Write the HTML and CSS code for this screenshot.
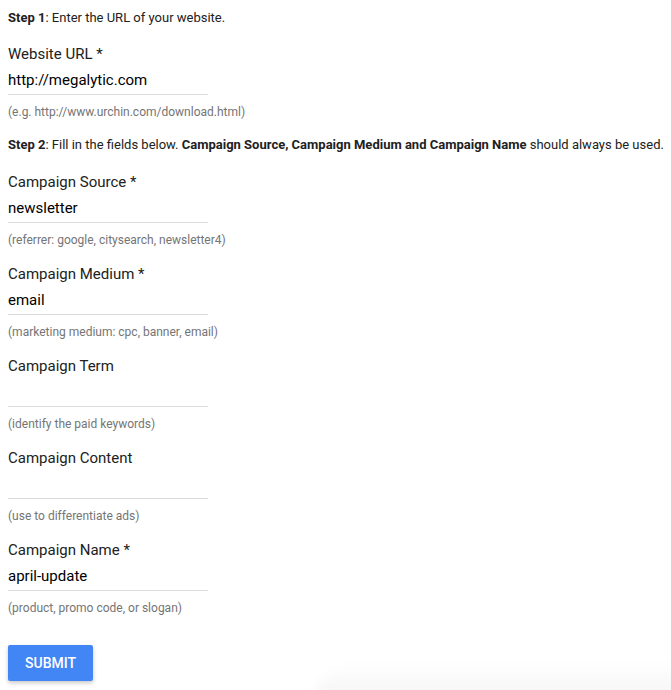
FILE: index.html
```html
<!DOCTYPE html>
<html>
<head>
<meta charset="utf-8">
<link rel="stylesheet" href="styles.css">
</head>
<body>
<form class="builder">
  <p class="step step-first"><b>Step 1</b>: Enter the URL of your website.</p>
  <div class="field">
    <label class="label">Website URL *</label>
    <input class="input" type="text" value="http://megalytic.com">
    <div class="hint">(e.g. http://www.urchin.com/download.html)</div>
  </div>
  <p class="step"><b>Step 2</b>: Fill in the fields below. <b>Campaign Source, Campaign Medium and Campaign Name</b> should always be used.</p>
  <div class="field">
    <label class="label">Campaign Source *</label>
    <input class="input" type="text" value="newsletter">
    <div class="hint">(referrer: google, citysearch, newsletter4)</div>
  </div>
  <div class="field">
    <label class="label">Campaign Medium *</label>
    <input class="input" type="text" value="email">
    <div class="hint">(marketing medium: cpc, banner, email)</div>
  </div>
  <div class="field">
    <label class="label">Campaign Term</label>
    <input class="input" type="text" value="">
    <div class="hint">(identify the paid keywords)</div>
  </div>
  <div class="field">
    <label class="label">Campaign Content</label>
    <input class="input" type="text" value="">
    <div class="hint">(use to differentiate ads)</div>
  </div>
  <div class="field">
    <label class="label">Campaign Name *</label>
    <input class="input" type="text" value="april-update">
    <div class="hint">(product, promo code, or slogan)</div>
  </div>
  <button class="submit" type="button">SUBMIT</button>
</form>
<div class="page-fade"></div>
</body>
</html>
```

FILE: styles.css
```css
html, body {
  margin: 0;
  padding: 0;
  background: #ffffff;
}
body {
  padding: 8px;
  font-family: Roboto, "Noto Sans", "Liberation Sans", sans-serif;
  color: #212121;
  overflow: hidden;
  height: 674px;
  position: relative;
}
.builder {
  display: flex;
  flex-direction: column;
  align-items: flex-start;
}
.step {
  margin: 1px 0 15px 0;
  font-size: 13px;
  line-height: 20px;
  color: #212121;
  white-space: nowrap;
}
.step-first {
  margin: 0 0 14px 0;
}
.step b {
  font-weight: 700;
}
.field {
  display: flex;
  flex-direction: column;
  align-items: flex-start;
  margin-bottom: 14px;
}
.label {
  font-size: 15px;
  line-height: 24px;
  color: #212121;
}
.input {
  margin: 2px 0 0 0;
  width: 200px;
  height: 24px;
  padding: 0 0 2px 0;
  border: none;
  border-bottom: 1px solid #dcdcdc;
  font-family: Roboto, "Noto Sans", "Liberation Sans", sans-serif;
  font-size: 15px;
  line-height: 24px;
  color: #000000;
  background: transparent;
  outline: none;
  box-sizing: content-box;
}
.hint {
  margin-top: 9px;
  font-size: 12px;
  line-height: 16px;
  color: #757575;
}
.field:last-of-type {
  margin-bottom: 0;
}
.submit {
  margin-top: 29px;
  height: 36px;
  padding: 0 17px;
  border: none;
  border-radius: 2px;
  background: #4285f4;
  color: #ffffff;
  font-family: Roboto, "Noto Sans", "Liberation Sans", sans-serif;
  font-size: 14px;
  font-weight: 500;
  box-shadow: 0 2px 4px rgba(0, 0, 0, 0.22);
  cursor: pointer;
}
.page-fade {
  position: absolute;
  left: 316px;
  right: -20px;
  top: 660px;
  bottom: -20px;
  border-top-left-radius: 80px 34px;
  background: linear-gradient(to bottom, rgba(0, 0, 0, 0) 0%, rgba(0, 0, 0, 0.05) 100%);
  filter: blur(6px);
  pointer-events: none;
}
```
